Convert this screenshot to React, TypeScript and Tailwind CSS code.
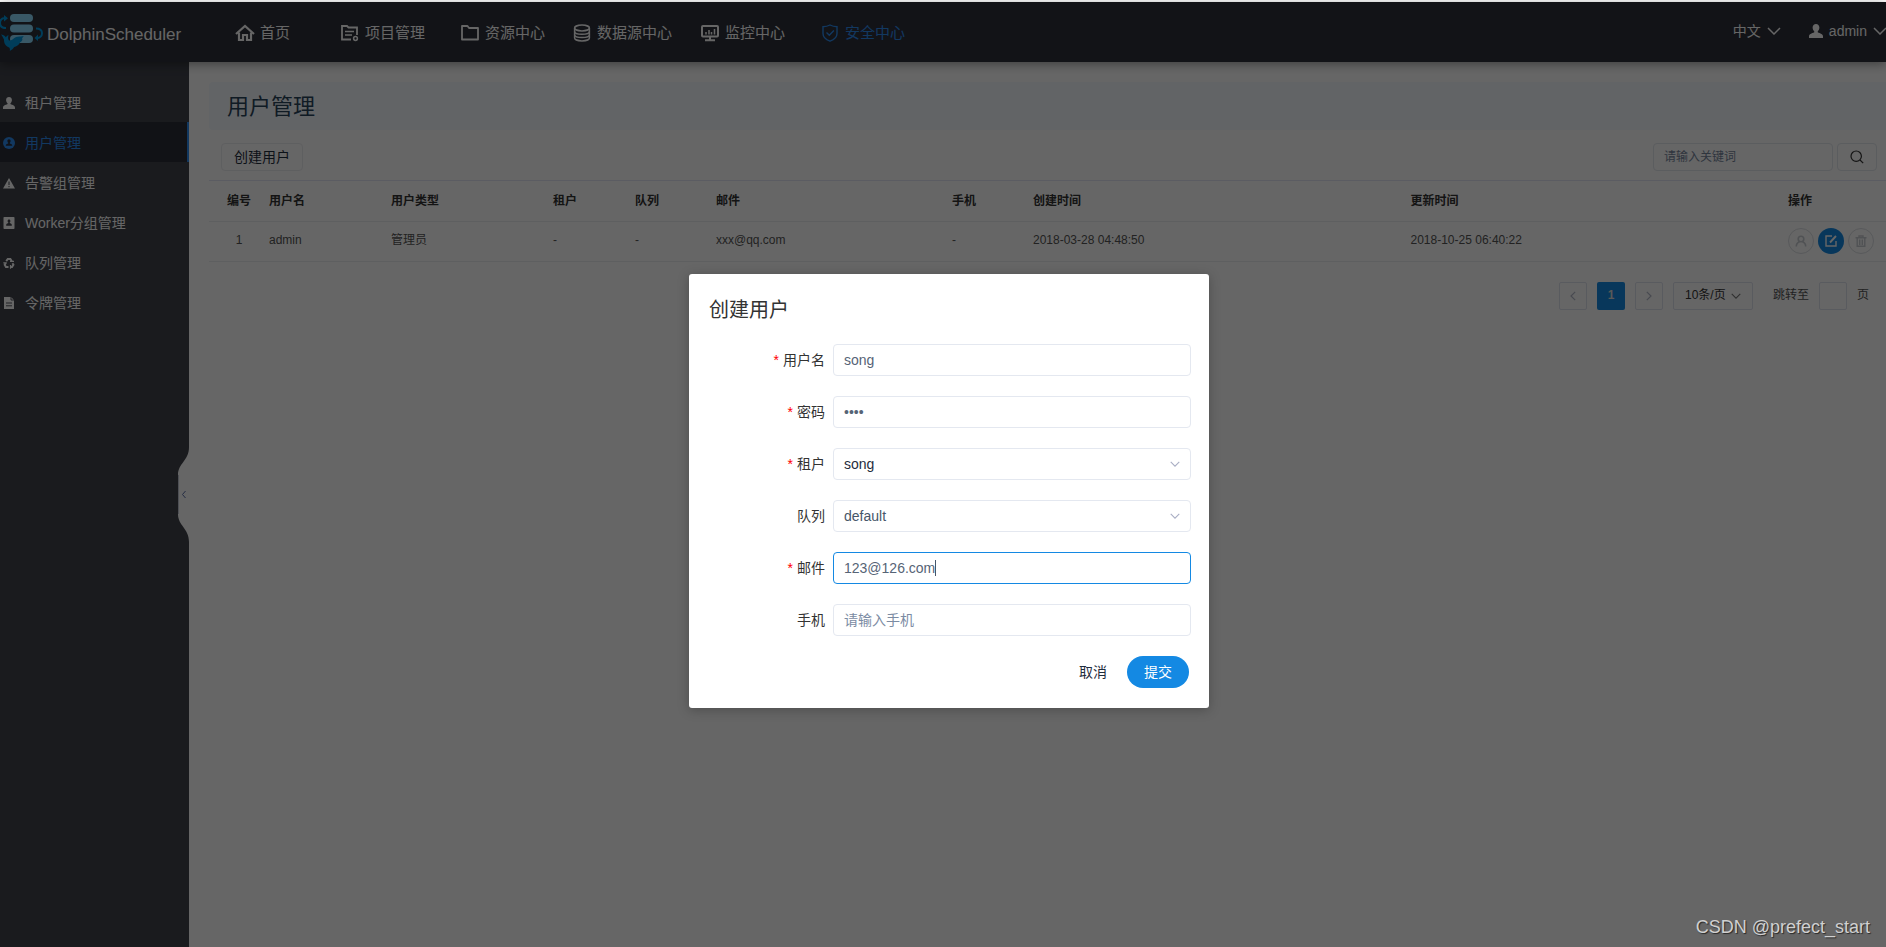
import type { ReactNode } from 'react';

type IconProps = { className?: string };

function HomeIcon() {
  return (
    <svg viewBox="0 0 20 18" className="h-[18px] w-5" fill="none" stroke="currentColor" strokeWidth="2.2">
      <path d="M1 10 10 2l9 8" />
      <path d="M4 8.5V16h4v-5h4v5h4V8.5" />
    </svg>
  );
}

function ProjectIcon() {
  return (
    <svg viewBox="0 0 20 18" className="h-[18px] w-5" fill="none" stroke="currentColor" strokeWidth="1.8">
      <path d="M11 15.5H2V2h5l1.500 1.500H17V11" />
      <path d="M5 7.500h9M5 11h7" strokeWidth="1.600" />
      <circle cx="15.5" cy="14.5" r="1.9" strokeWidth="1.5" />
    </svg>
  );
}

function FolderIcon() {
  return (
    <svg viewBox="0 0 20 18" className="h-[18px] w-5" fill="none" stroke="currentColor" strokeWidth="1.8">
      <path d="M2 2h5.500l1.500 2h9v11.500H2z" strokeLinejoin="round" />
    </svg>
  );
}

function DatabaseIcon() {
  return (
    <svg viewBox="0 0 20 18" className="h-[18px] w-5" fill="none" stroke="currentColor" strokeWidth="1.500">
      <ellipse cx="10" cy="4" rx="7.4" ry="2.9" />
      <path d="M2.6 4v10c0 1.6 3.3 2.9 7.4 2.9s7.4-1.3 7.4-2.9V4" />
      <path d="M2.6 7.4c0 1.6 3.3 2.8 7.4 2.8s7.4-1.2 7.4-2.8M2.6 10.8c0 1.6 3.3 2.8 7.4 2.8s7.4-1.2 7.4-2.8" />
    </svg>
  );
}

function MonitorIcon() {
  return (
    <svg viewBox="0 0 20 18" className="h-[18px] w-5" fill="none" stroke="currentColor" strokeWidth="2">
      <rect x="2" y="2" width="16" height="10.5" rx="1" />
      <path d="M10 12.5V16M5 16.2h10" />
      <path d="M6 10.500V8M9 10.500V6M11.500 10.500V8M14.500 10.500V5" strokeWidth="1.500" />
    </svg>
  );
}

function ShieldIcon() {
  return (
    <svg viewBox="0 0 20 18" className="h-[18px] w-5" fill="none" stroke="currentColor" strokeWidth="1.400">
      <path d="M10 1c2.200 1.200 4.500 1.700 7 1.700v6.800c0 3.500-3 6.200-7 7.700-4-1.500-7-4.200-7-7.700V2.700C5.500 2.700 7.800 2.200 10 1z" />
      <path d="m6.500 8.500 2.800 2.700 4.600-4.700" />
    </svg>
  );
}

function PersonIcon({ className }: IconProps) {
  return (
    <svg viewBox="0 0 14 14" className={className} fill="currentColor">
      <path d="M7 0c2 0 3.400 1.500 3.400 3.600 0 1.500-.7 3-1.700 3.800v.9c.5.500 5.300 1.300 5.300 4V14H0v-1.700c0-2.700 4.800-3.500 5.300-4v-.9C4.300 6.600 3.600 5.100 3.600 3.600 3.600 1.500 5 0 7 0z" />
    </svg>
  );
}

function UserCircleIcon() {
  return (
    <svg viewBox="0 0 12 12" className="size-3">
      <circle cx="6" cy="6" r="6" fill="currentColor" />
      <path d="M6 2.300c1 0 1.600.7 1.600 1.700 0 .8-.3 1.400-.8 1.800v.6c.3.300 2.400.5 2.400 1.900v.4H2.800v-.4c0-1.400 2.100-1.600 2.400-1.900v-.6c-.5-.4-.8-1-.8-1.800 0-1 .6-1.700 1.600-1.700z" fill="#2b2e38" />
    </svg>
  );
}

function WarningIcon() {
  return (
    <svg viewBox="0 0 12 12" className="size-3">
      <path d="M6 1 12 11.500H0z" fill="currentColor" />
      <path d="M6 4.500v3.500M6 9v1.200" stroke="#41444c" strokeWidth="1" />
    </svg>
  );
}

function BadgeIcon() {
  return (
    <svg viewBox="0 0 12 12" className="size-3">
      <rect x="0.500" y="0" width="11" height="12" rx="0.800" fill="currentColor" />
      <path d="M6 2.500c.9 0 1.400.6 1.400 1.500 0 .7-.3 1.200-.7 1.500v.6c.3.300 2.100.5 2.100 1.700v.9H3.200v-.9c0-1.200 1.800-1.400 2.100-1.700v-.6c-.4-.3-.7-.8-.7-1.500 0-.9.500-1.500 1.400-1.500z" fill="#41444c" />
    </svg>
  );
}

function RecycleIcon() {
  return (
    <svg viewBox="0 0 12 12" className="size-3" fill="none" stroke="currentColor">
      <path d="M3.200 4.200 4.800 2h2.600l1.400 2.200" strokeWidth="2" />
      <path d="m9.400 6.200 1 1.600L9 10H7" strokeWidth="2" />
      <path d="M5.500 10H3L1.700 7.800l1-1.700" strokeWidth="2" />
      <path d="M7 4.300h4M7.500 8v3.800M.300 5.800h3.500" strokeWidth="1.200" />
    </svg>
  );
}

function DocumentIcon() {
  return (
    <svg viewBox="0 0 12 12" className="size-3">
      <path d="M1 0h7l3 3v9H1z" fill="currentColor" />
      <path d="M8 0v3h3M3 6h6M3 8.800h6" stroke="#41444c" fill="none" strokeWidth="0.900" />
    </svg>
  );
}

function Chevron({ className }: IconProps) {
  return (
    <svg viewBox="0 0 14 8" className={className} fill="none" stroke="currentColor" strokeWidth="1.500">
      <path d="m1 1 6 6 6-6" />
    </svg>
  );
}

function SideChevron({ className }: IconProps) {
  return (
    <svg viewBox="0 0 6 10" className={className} fill="none" stroke="currentColor" strokeWidth="1.200">
      <path d="M5.200.8 1 5l4.200 4.200" />
    </svg>
  );
}

function Logo() {
  return (
    <svg viewBox="0 0 44 40" className="h-10 w-11 shrink-0">
      <g fill="#8edcff">
        <rect x="10" y="2" width="23" height="8" rx="4" />
        <rect x="10" y="12.500" width="23" height="8" rx="4" />
        <rect x="10" y="23" width="23" height="8" rx="4" />
      </g>
      <g fill="none" stroke="#0098e0" strokeWidth="2">
        <path d="M6 16C1 16 0 13.500 0 11c0-3 2-5 5.500-5" />
        <path d="M36 16.500c4 0 6 2 6 4.700 0 3-2.500 4.800-5 4.800" />
      </g>
      <path d="m4 3 4 3.200L4 9.500zM38 22.500 34.500 26l3.500 3z" fill="#0098e0" />
      <path
        d="M1 22.500c1.500 0 3.800.8 4.800 2.700.9-1.200 1.700-1.700 2.800-1.900-.6 1.800-.8 3.200.2 4.900 1.600.6 3-.2 4.600-1.400 2-1.800 4.300-2.600 7-2.300l3.400-.6-1.700 2.400c.9 1.600-.2 3.300-1.900 4-1.400 2.900-3.800 4.400-6 4.800-.8 1.400-2.400 3-4.400 3.900.3-1.500.2-2.500-.6-3.600C5.800 34.600 3.800 31.200 4 27.500 3 25.700 2.500 24 1 22.500z"
        fill="#0098e0"
      />
    </svg>
  );
}

const navItems: { label: string; icon: ReactNode; width: string; active?: boolean }[] = [
  { label: '首页', icon: <HomeIcon />, width: 'w-[105px]' },
  { label: '项目管理', icon: <ProjectIcon />, width: 'w-[120px]' },
  { label: '资源中心', icon: <FolderIcon />, width: 'w-[112px]' },
  { label: '数据源中心', icon: <DatabaseIcon />, width: 'w-[128px]' },
  { label: '监控中心', icon: <MonitorIcon />, width: 'w-[120px]' },
  { label: '安全中心', icon: <ShieldIcon />, width: 'w-[120px]', active: true },
];

const menuItems: { label: string; icon: ReactNode; active?: boolean }[] = [
  { label: '租户管理', icon: <PersonIcon className="size-3" /> },
  { label: '用户管理', icon: <UserCircleIcon />, active: true },
  { label: '告警组管理', icon: <WarningIcon /> },
  { label: 'Worker分组管理', icon: <BadgeIcon /> },
  { label: '队列管理', icon: <RecycleIcon /> },
  { label: '令牌管理', icon: <DocumentIcon /> },
];

function Header() {
  return (
    <header className="relative z-10 flex h-[60px] items-center bg-[#2d303a] text-white shadow-[0_2px_10px_rgba(0,0,0,0.4)]">
      <a href="#home" className="flex w-[235px] shrink-0 items-center gap-[3px]">
        <Logo />
        <span className="pt-[6px] text-[17px]">DolphinScheduler</span>
      </a>
      <nav className="flex flex-1 pt-[2px]">
        {navItems.map((item) => (
          <a
            key={item.label}
            href="#nav"
            className={`flex shrink-0 items-center gap-[5px] text-[15px] ${item.width} ${item.active ? 'text-[#2d8cf0]' : ''}`}
          >
            {item.icon}
            {item.label}
          </a>
        ))}
      </nav>
      <div className="-mr-px flex shrink-0 items-center gap-7 pb-[2px] text-sm">
        <button type="button" className="flex items-center gap-[6px]">
          中文
          <Chevron className="h-2 w-[14px]" />
        </button>
        <button type="button" className="flex items-center gap-[6px]">
          <PersonIcon className="size-[14px]" />
          admin
          <Chevron className="h-2 w-[14px]" />
        </button>
      </div>
    </header>
  );
}

function Sidebar() {
  return (
    <aside className="relative w-[189px] shrink-0 bg-[#41444c] pt-5 text-white">
      <nav>
        {menuItems.map((item) => (
          <a
            key={item.label}
            href="#menu"
            className={`flex h-10 items-center gap-[10px] border-r-2 pt-[2px] pl-[3px] text-sm ${
              item.active ? 'border-[#2d8cf0] bg-[#2b2e38] text-[#2d8cf0]' : 'border-transparent'
            }`}
          >
            {item.icon}
            {item.label}
          </a>
        ))}
      </nav>
      <button type="button" aria-label="收起菜单" className="absolute top-[380px] right-0 h-[102px] w-[11px] text-[#5a6ea8]">
        <svg viewBox="0 0 11 102" className="h-full w-full">
          <path d="M11 0v5C11 19 0 21 0 33v39c0 12 11 14 11 28z" fill="#fff" />
          <path d="M.5 33v39" stroke="#c4c8d4" strokeWidth="1" />
          <path d="m7.500 49-3 3.500 3 3.500" fill="none" stroke="currentColor" strokeWidth="1" />
        </svg>
      </button>
    </aside>
  );
}

const columns = [
  { title: '编号', width: 'w-[60px]' },
  { title: '用户名', width: 'w-[122px]' },
  { title: '用户类型', width: 'w-[162px]' },
  { title: '租户', width: 'w-[82px]' },
  { title: '队列', width: 'w-[81px]' },
  { title: '邮件', width: 'w-[236px]' },
  { title: '手机', width: 'w-[81px]' },
  { title: '创建时间', width: '' },
  { title: '更新时间', width: '' },
  { title: '操作', width: 'w-[98px]' },
];

const row = ['1', 'admin', '管理员', '-', '-', 'xxx@qq.com', '-', '2018-03-28 04:48:50', '2018-10-25 06:40:22'];

function UserTable() {
  return (
    <table className="w-full table-fixed border-t border-[#e3e6f5] text-left text-xs text-[#555]">
      <thead>
        <tr className="h-[41px] border-b border-[#ecedf0] text-[#333]">
          {columns.map((c, i) => (
            <th key={c.title} className={`${c.width} p-0 pb-px font-bold ${i === 0 ? 'text-center' : ''}`}>
              {c.title}
            </th>
          ))}
        </tr>
      </thead>
      <tbody>
        <tr className="h-10 border-b border-[#ecedf0]">
          {row.map((cell, i) => (
            <td key={i} className={`p-0 pb-1 ${i === 0 ? 'text-center' : ''}`}>
              {cell}
            </td>
          ))}
          <td className="p-0 pb-[2px]">
            <div className="flex items-center gap-1">
              <button type="button" aria-label="授权" disabled className="flex size-[26px] items-center justify-center rounded-full border border-[#dcdee3] text-[#c9ccd2]">
                <svg viewBox="0 0 12 12" className="size-3" fill="none" stroke="currentColor" strokeWidth="1.600">
                  <circle cx="6" cy="4" r="2.800" />
                  <path d="M1.300 11.500C1.300 9 3 7.200 4.800 6.500M10.700 11.500C10.700 9 9 7.200 7.200 6.500" />
                </svg>
              </button>
              <button type="button" aria-label="编辑" className="flex size-[26px] items-center justify-center rounded-full bg-[#1489e3] text-white">
                <svg viewBox="0 0 12 12" className="size-3" fill="none" stroke="currentColor" strokeWidth="1.400">
                  <path d="M7 1H1v10h10V6" />
                  <path d="m5 7.500 6-6.500" strokeWidth="1.900" />
                </svg>
              </button>
              <button type="button" aria-label="删除" disabled className="flex size-[26px] items-center justify-center rounded-full border border-[#dcdee3] text-[#c9ccd2]">
                <svg viewBox="0 0 12 12" className="size-3" fill="none" stroke="currentColor" strokeWidth="1.400">
                  <path d="M.500 2.700h11M4 2.500V1h4v1.500M2.200 3v8.200h7.600V3M4.700 4.500v5.500M7.300 4.500v5.500" />
                </svg>
              </button>
            </div>
          </td>
        </tr>
      </tbody>
    </table>
  );
}

function Pagination() {
  return (
    <div className="mt-5 flex items-center justify-end gap-[10px] pr-[17px] text-xs text-[#555]">
      <button type="button" aria-label="上一页" className="flex size-7 items-center justify-center rounded-xs border border-[#dfe3ee] text-[#b4b9c8]">
        <SideChevron className="h-[10px] w-[6px]" />
      </button>
      <button type="button" className="size-7 rounded-xs bg-[#1489e3] pb-[2px] font-bold text-[#ddd]">
        1
      </button>
      <button type="button" aria-label="下一页" className="flex size-7 items-center justify-center rounded-xs border border-[#dfe3ee] text-[#b4b9c8]">
        <SideChevron className="h-[10px] w-[6px] rotate-180" />
      </button>
      <div className="relative">
        <select aria-label="每页条数" className="block h-7 w-20 appearance-none rounded-xs border border-[#dfe3ee] px-[11px] pb-[2px] text-[#333]">
          <option>10条/页</option>
        </select>
        <Chevron className="pointer-events-none absolute top-[11px] right-3 h-[6px] w-[10px] text-[#777]" />
      </div>
      <label className="ml-[10px] flex items-center gap-[10px]">
        <span className="pb-[2px]">跳转至</span>
        <input type="text" className="h-7 w-7 rounded-xs border border-[#dfe3ee]" />
        <span className="pb-[2px]">页</span>
      </label>
    </div>
  );
}

function Content() {
  return (
    <main className="min-w-0 flex-1 bg-white pt-5 pl-5">
      <h1 className="flex h-12 items-center rounded-l-sm bg-[#f6faff] pl-[18px] text-[22px] text-[#2a455b]">用户管理</h1>
      <div className="mt-[13px] mb-[9px] flex items-center justify-between pr-[9px] pl-3">
        <button type="button" className="h-7 w-[82px] rounded-sm border border-[#ecedf0] text-sm leading-6 text-[#1f2d3d]">
          创建用户
        </button>
        <div className="flex gap-1">
          <input type="text" aria-label="关键词" placeholder="请输入关键词" className="h-7 w-[180px] rounded-sm border border-[#e3e8ee] px-[10px] text-xs placeholder:text-[#76859c]" />
          <button type="button" aria-label="搜索" className="flex h-7 w-10 items-center justify-center rounded-sm border border-[#e3e8ee] text-[#333]">
            <svg viewBox="0 0 14 14" className="size-[14px]" fill="none" stroke="currentColor" strokeWidth="1.200">
              <circle cx="6.200" cy="6.200" r="5.200" />
              <path d="m10 10 3.200 3.200" />
            </svg>
          </button>
        </div>
      </div>
      <UserTable />
      <Pagination />
    </main>
  );
}

function Field({ id, label, required, children }: { id: string; label: string; required?: boolean; children: ReactNode }) {
  return (
    <div className="flex items-center gap-2">
      <label htmlFor={id} className="flex w-[116px] shrink-0 justify-end gap-1 text-[#333]">
        {required && <span className="text-[#f00]">*</span>}
        {label}
      </label>
      <div className="relative min-w-0 flex-1">{children}</div>
    </div>
  );
}

const boxClass = 'block h-8 w-full appearance-none rounded-sm border bg-white px-[10px] outline-none';

function SelectBox({ id, value, tone }: { id: string; value: string; tone: string }) {
  return (
    <>
      <select id={id} defaultValue={value} className={`${boxClass} border-[#e4e8f0] ${tone}`}>
        <option>{value}</option>
      </select>
      <Chevron className="pointer-events-none absolute top-[13px] right-[11px] h-[6px] w-[10px] text-[#a9aec4]" />
    </>
  );
}

function CreateUserDialog() {
  return (
    <form
      role="dialog"
      aria-labelledby="dialog-title"
      className="w-[520px] rounded-[3px] bg-white pt-5 pr-[18px] pb-5 pl-5 text-sm shadow-[0_2px_12px_rgba(0,0,0,0.25)]"
    >
      <h2 id="dialog-title" className="mb-[18px] text-[20px] leading-8 text-[#333]">
        创建用户
      </h2>
      <div className="flex flex-col gap-5">
        <Field id="username" label="用户名" required>
          <input id="username" type="text" defaultValue="song" className={`${boxClass} border-[#e4e8f0] text-[#566476]`} />
        </Field>
        <Field id="password" label="密码" required>
          <input id="password" type="password" defaultValue="song" className={`${boxClass} border-[#e4e8f0] text-[#566476]`} />
        </Field>
        <Field id="tenant" label="租户" required>
          <SelectBox id="tenant" value="song" tone="text-[#1f2d3d]" />
        </Field>
        <Field id="queue" label="队列">
          <SelectBox id="queue" value="default" tone="text-[#475669]" />
        </Field>
        <Field id="email" label="邮件" required>
          <input id="email" type="text" defaultValue="123@126.com" className={`${boxClass} border-[#1489e3] text-[#566476]`} />
          <span className="pointer-events-none absolute top-2 left-[102px] h-4 w-px bg-[#475669]" />
        </Field>
        <Field id="phone" label="手机">
          <input id="phone" type="text" placeholder="请输入手机" className={`${boxClass} border-[#e4e8f0] placeholder:text-[#7b8ba3]`} />
        </Field>
      </div>
      <div className="mt-5 flex justify-end gap-5 pr-[2px]">
        <button type="button" className="h-8 text-[#1f2d3d]">
          取消
        </button>
        <button type="submit" className="h-8 w-[62px] rounded-full bg-[#1489e3] text-white">
          提交
        </button>
      </div>
    </form>
  );
}

export default function App() {
  return (
    <div className="relative flex min-h-screen flex-col overflow-hidden bg-white pt-[2px] font-['Liberation_Sans','Noto_Sans_CJK_SC',sans-serif]">
      <Header />
      <div className="flex flex-1">
        <Sidebar />
        <Content />
      </div>
      <div className="absolute inset-0 top-[2px] z-20 flex items-start justify-center bg-black/60 pt-[272px] pl-3">
        <CreateUserDialog />
      </div>
      <p className="absolute right-4 bottom-[6px] z-30 text-[18px] text-[#d0d0d0] [text-shadow:1px_1px_1px_rgba(0,0,0,0.6)]">
        CSDN @prefect_start
      </p>
    </div>
  );
}
